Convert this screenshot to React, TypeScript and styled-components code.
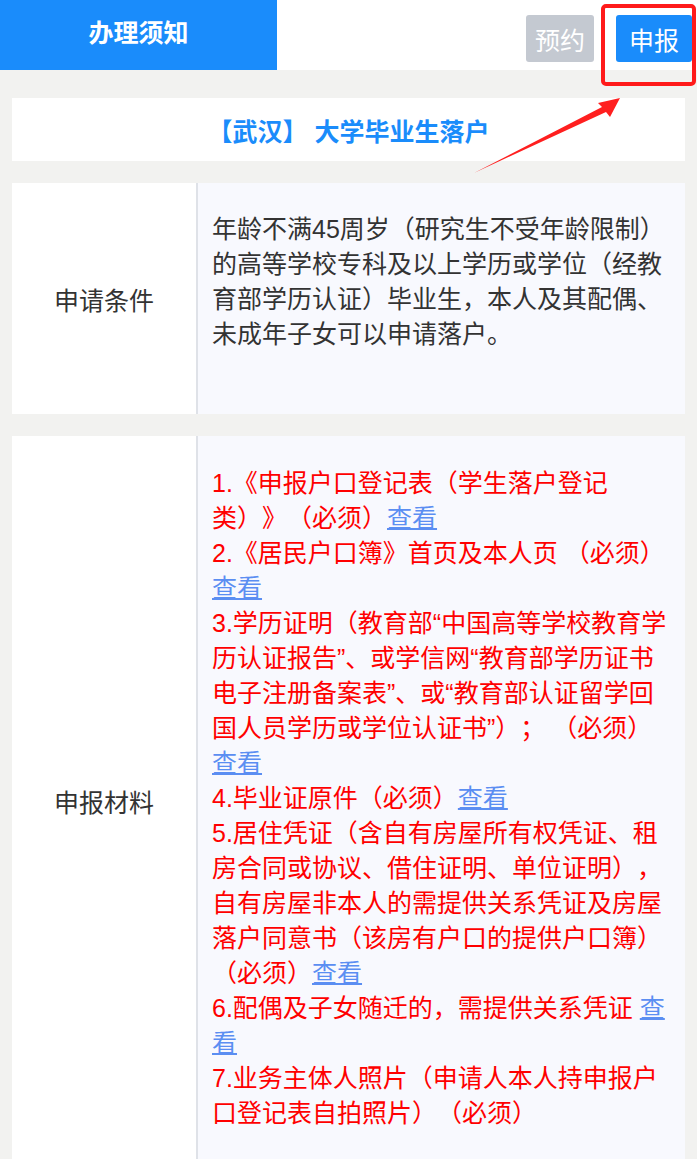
import React from "react";
import styled, { createGlobalStyle } from "styled-components";

const BLUE = "#1a8cfb";
const RED = "#ff0000";

const GlobalStyle = createGlobalStyle`
  html, body {
    margin: 0;
    padding: 0;
    background: #f2f2f0;
  }
  body {
    font-family: "Liberation Sans", "Noto Sans CJK SC", sans-serif;
    color: #333;
    text-spacing-trim: space-all;
  }
`;

type Part = { text: string; link?: boolean };

const rules: Part[][] = [
  [{ text: "1.《申报户口登记表（学生落户登记类）》（必须）" }, { text: "查看", link: true }],
  [{ text: "2.《居民户口簿》首页及本人页 （必须）" }, { text: "查看", link: true }],
  [
    {
      text:
        "3.学历证明（教育部“中国高等学校教育学历认证报告”、或学信网“教育部学历证书电子注册备案表”、或“教育部认证留学回国人员学历或学位认证书”）； （必须）",
    },
    { text: "查看", link: true },
  ],
  [{ text: "4.毕业证原件（必须）" }, { text: "查看", link: true }],
  [
    {
      text:
        "5.居住凭证（含自有房屋所有权凭证、租房合同或协议、借住证明、单位证明），自有房屋非本人的需提供关系凭证及房屋落户同意书（该房有户口的提供户口簿）（必须）",
    },
    { text: "查看", link: true },
  ],
  [{ text: "6.配偶及子女随迁的，需提供关系凭证 " }, { text: "查看", link: true }],
  [{ text: "7.业务主体人照片（申请人本人持申报户口登记表自拍照片）（必须）" }],
];

export default function App() {
  return (
    <S.Page>
      <GlobalStyle />
      <S.Header>
        <S.Tab>办理须知</S.Tab>
        <S.Actions>
          <S.Button $active={false}>预约</S.Button>
          <S.Button $active>申报</S.Button>
        </S.Actions>
      </S.Header>

      <S.Content>
        <S.TitleCard>【武汉】 大学毕业生落户</S.TitleCard>

        <S.Row>
          <S.Label>申请条件</S.Label>
          <S.Body $top={29} $bottom={62}>
            年龄不满45周岁（研究生不受年龄限制）的高等学校专科及以上学历或学位（经教育部学历认证）毕业生，本人及其配偶、未成年子女可以申请落户。
          </S.Body>
        </S.Row>

        <S.Row>
          <S.Label>申报材料</S.Label>
          <S.Body $top={30} $bottom={35}>
            {rules.map((parts, i) => (
              <S.Item key={i}>
                {parts.map((p, j) =>
                  p.link ? <S.Link key={j}>{p.text}</S.Link> : <span key={j}>{p.text}</span>
                )}
              </S.Item>
            ))}
          </S.Body>
        </S.Row>
      </S.Content>

      <S.Highlight />
      <S.Arrow width="160" height="84" viewBox="0 0 160 84">
        <polygon points="4,78 132,12 128,8 150,3 140,22 136,17" fill="#ff1f1f" />
      </S.Arrow>
    </S.Page>
  );
}

const S = {
  Page: styled.div`
    position: relative;
    min-height: 1159px;
    overflow: hidden;
  `,
  Header: styled.header`
    display: flex;
    justify-content: space-between;
    height: 70px;
    background: #fff;
  `,
  Tab: styled.div`
    display: flex;
    align-items: center;
    justify-content: center;
    width: 277px;
    padding-bottom: 8px;
    box-sizing: border-box;
    background: ${BLUE};
    color: #fff;
    font-size: 25px;
    font-weight: 700;
  `,
  Actions: styled.div`
    display: flex;
    align-items: flex-start;
    gap: 22px;
    padding: 15px 5px 0 0;
  `,
  Button: styled.button<{ $active: boolean }>`
    height: 47px;
    padding: 0 ${(p) => (p.$active ? 13 : 9)}px;
    border: none;
    border-radius: 3px;
    background: ${(p) => (p.$active ? BLUE : "#c4c9d1")};
    color: #fff;
    font-family: inherit;
    font-size: 25px;
    cursor: pointer;
  `,
  Content: styled.main`
    display: flex;
    flex-direction: column;
    gap: 22px;
    padding: 28px 12px 0;
  `,
  TitleCard: styled.h1`
    display: flex;
    align-items: center;
    justify-content: center;
    height: 63px;
    margin: 0;
    background: #fff;
    color: ${BLUE};
    font-size: 25px;
    font-weight: 700;
    white-space: pre;
  `,
  Row: styled.section`
    display: grid;
    grid-template-columns: 186px 1fr;
  `,
  Label: styled.div`
    display: flex;
    align-items: center;
    justify-content: center;
    background: #fff;
    border-right: 2px solid #dfe2e8;
    font-size: 25px;
    color: #333;
  `,
  Body: styled.div<{ $top: number; $bottom: number }>`
    padding: ${(p) => p.$top}px 14px ${(p) => p.$bottom}px 14px;
    background: #f8f9fe;
    font-size: 25px;
    line-height: 35px;
    color: #333;
  `,
  Item: styled.div`
    color: ${RED};
  `,
  Link: styled.a`
    color: #5b8ef2;
    text-decoration: underline;
    text-underline-offset: 1px;
    cursor: pointer;
  `,
  Highlight: styled.div`
    position: absolute;
    left: 601px;
    top: 4px;
    width: 95px;
    height: 82px;
    box-sizing: border-box;
    border: 4px solid #ff1a1a;
    border-radius: 5px;
    pointer-events: none;
  `,
  Arrow: styled.svg`
    position: absolute;
    left: 470px;
    top: 95px;
    pointer-events: none;
  `,
};
